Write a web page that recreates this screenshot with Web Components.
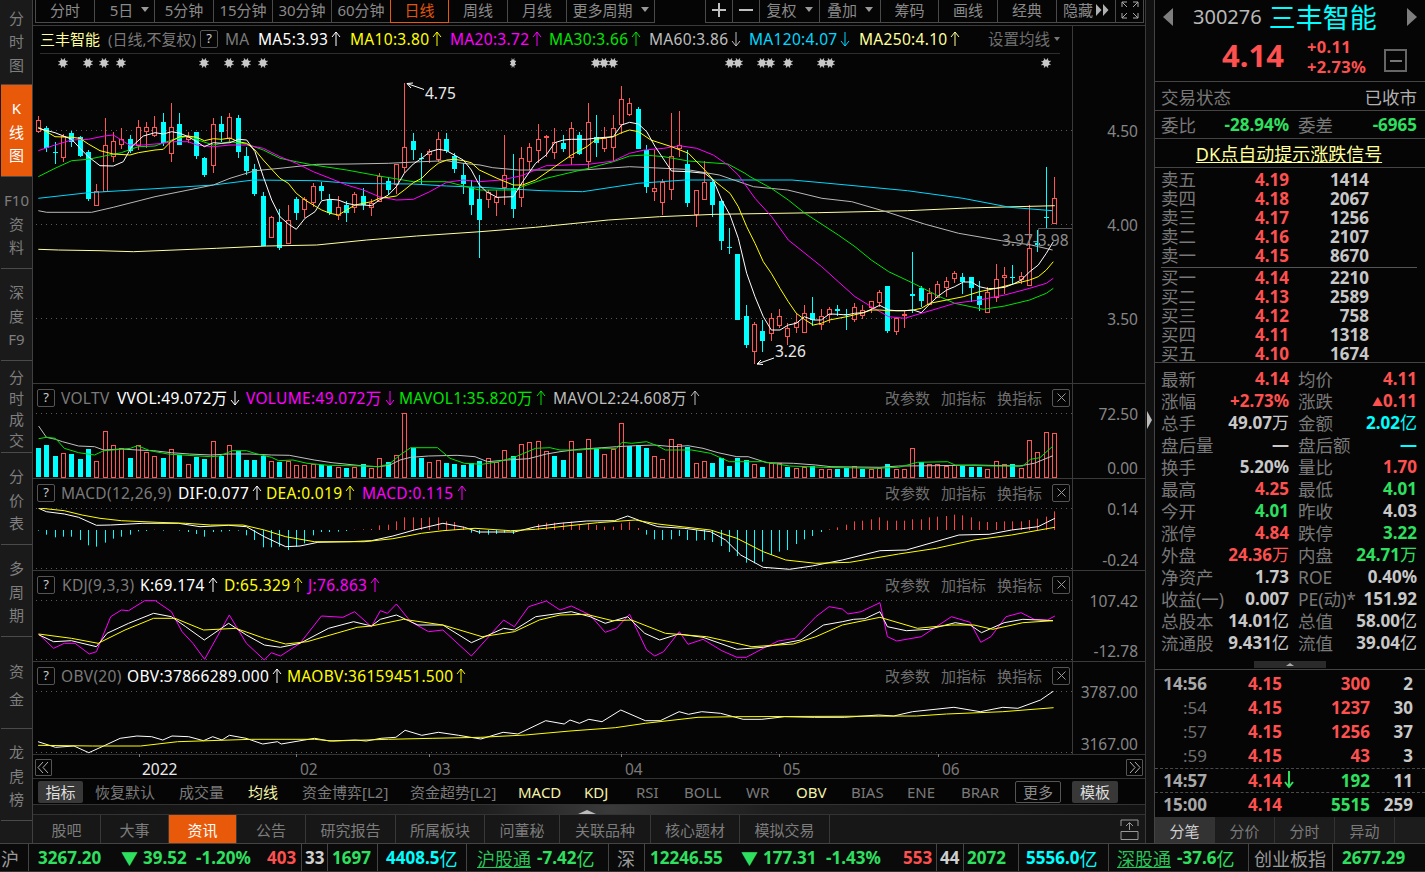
<!DOCTYPE html>
<html lang="zh">
<head>
<meta charset="utf-8">
<title>三丰智能 K线图</title>
<style>
  html,body{margin:0;background:#050505;}
  body{width:1425px;height:872px;overflow:hidden;font-family:"Noto Sans","Noto Sans CJK SC",sans-serif;color:#8a8a8a;}
</style>
</head>
<body>
<ths-app></ths-app>
<script>
// Stock terminal screenshot rebuilt as web components. Chart data read off the picture, y values are in 3x pixels.
(function () {
  const RED = '#ff5555', CY = '#00ffff', GR = '#2fe060', LINE = '#3a3a3a';
  const c1 = (a) => a.map(([x, y]) => [x / 3, y / 3]);
  const c2 = (a) => a.map(([x, y]) => [480 + x / 2.34, y / 3]);
  const c11 = (a) => a.map(([x, y]) => [700 + x / 3, 160 + y / 3]);
  const poly = (pts, col) => `<polyline fill="none" stroke="${col}" stroke-width="1" stroke-linejoin="round" points="${pts.map((p) => p[0].toFixed(1) + ',' + p[1].toFixed(1)).join(' ')}"/>`;
  const dotted = (y) => `<line x1="36" x2="1072" y1="${y + .5}" y2="${y + .5}" stroke="#5a5a5a" stroke-dasharray="1 4"/>`;
  const X = (i) => Math.floor(38.4 + 8.328 * i);

  // R/C, high, body top, body bottom, low
  const K = [
    'R348,360,392,398','C378,385,445,455','C425,455,458,493','R402,407,470,485','C392,400,425,440','C408,412,468,472','C450,455,598,604','R552,572,616,618','R355,436,572,574','R397,424,468,485',
    'R385,418,432,448','C405,418,452,460','R360,380,436,450','R365,380,392,445','R348,380,405,410','C340,366,430,438','R310,380,458,485','C340,372,434,436','R395,410,418,430','C396,396,468,478',
    'C472,474,526,530','R355,372,494,518','C348,372,396,425','R340,350,414,425','C346,354,456,474','C440,468,514,525','C492,508,582,588','C576,588,738,738','R648,650,712,714','C628,666,744,750',
    'R615,660,730,732','C592,596,638,660','R590,596,628,655','R548,558,606,620','C545,558,574,600','C582,598,640,645','R588,622,646,660','C602,615,638,665','R575,582,622,640','C565,588,616,630',
    'R598,610,622,648','R520,528,604,606','C530,544,570,585','R492,492,552,582','R250,442,502,520','C400,424,450,480','C460,474,477,556','R448,452,462,490','R395,418,478,485','C400,418,452,460',
    'C458,468,506,520','C490,526,552,582','C540,560,615,645','C525,598,660,775','R570,575,598,625','R570,590,605,648','R405,526,562,615','C462,565,626,654','R440,475,590,622','R430,442,484,510',
    'R372,418,450,490','R405,408,412,470','R385,425,455,478','C405,430,448,456','R365,385,470,495','C395,405,462,465','R310,367,482,510','C345,410,430,470','R380,415,445,455','R345,385,442,482',
    'R258,298,372,402','R295,310,342,348','C322,326,447,447','C435,450,562,580','R450,565,572,602','R538,545,605,645','R340,468,566,600','R332,435,445,470','C450,492,608,620','R570,570,642,682',
    'R482,546,598,600','C540,546,614,650','C600,604,722,750','C685,742,745,763','C762,762,960,960','C915,948,1035,1043','R967,972,1052,1092','C960,992,1023,1055','R938,954,1000,1023','R927,948,975,985',
    'R968,985,1007,1035','R940,967,980,998','R916,940,995,998','C892,940,960,977','R928,948,972,990','R920,927,941,970','C916,927,934,947','C927,942,946,990','R910,922,956,966','R916,930,946,958',
    'R904,904,920,938','R870,877,905,920','C858,858,992,998','R950,955,994,1005','R930,942,946,985','C756,882,888,940','C858,865,902,920','R863,878,912,915','R842,853,892,892','R830,844,860,890',
    'R813,820,833,848','C818,832,846,882','C832,832,864,905','C843,888,915,932','R860,877,935,935','R792,838,890,905','R802,826,832,882','C796,832,835,852','R815,827,836,852','R616,745,855,858',
    'C690,730,734,755','C502,650,654,685','R532,595,668,668'
  ];
  const candle = (s, i) => {
    const up = s[0] === 'R';
    const [h, t, b, l] = s.slice(1).split(',').map((v) => Math.round(v / 3));
    const x = X(i), col = up ? RED : CY;
    let o = `<line x1="${x + .5}" x2="${x + .5}" y1="${h}" y2="${l}" stroke="${col}"/>`;
    if (up) o += `<rect x="${x - 1.5}" y="${t + .5}" width="4" height="${Math.max(b - t, 1)}" fill="#050505" stroke="${col}"/>`;
    else o += `<rect x="${x - 2}" y="${t}" width="5" height="${Math.max(b - t, 1)}" fill="${col}"/>`;
    return o;
  };
  const burst = (x, narrow) => {
    let o = `<g transform="translate(${x} 63)${narrow ? ' scale(.65 1)' : ''}"><circle r="3.4" fill="#c8c8c8"/>`;
    for (let a = 0; a < 8; a++) o += `<line x2="5" y2="0" transform="rotate(${a * 45 + 22})" stroke="#c8c8c8"/>`;
    return o + '</g>';
  };

  const MA = {
    white: [...c1([[115,385],[165,398],[215,418],[240,445],[265,470],[300,497],[340,498],[370,485],[395,440],[430,408],[465,398],[490,402],[515,395],[540,400],[565,410],[590,425],[613,440],[640,428],[665,430],[690,428],[715,418],[740,420],[765,455],[790,530],[815,600],[840,650],[865,672],[889,688],[915,655],[945,635],[965,602],[990,598],[1015,600],[1040,610],[1065,615],[1090,615],[1115,617],[1138,600],[1165,585],[1189,560],[1213,520],[1240,492],[1265,475],[1290,455],[1315,448],[1340,452],[1363,465],[1390,480],[1414,510],[1438,555]]),
      ...c2([[15,575],[40,592],[78,590],[100,545],[130,490],[155,465],[175,428],[195,420],[214,418],[250,418],[272,414],[312,410],[331,375],[350,367],[371,372],[390,395],[410,440],[448,513],[488,515],[526,520]]),
      ...c11([[40,60],[65,120],[90,165],[115,235],[140,340],[165,410],[190,470],[214,510],[240,510],[265,495],[289,490],[313,470],[340,480],[364,480],[388,462],[415,463],[440,465],[463,460],[490,458],[514,448],[539,436],[566,450],[589,452],[614,452],[640,450],[664,458],[689,432],[715,408],[740,390],[764,380],[790,366],[814,366],[838,380],[865,386],[889,385],[914,382],[940,372],[964,360],[989,335],[1015,315],[1039,280],[1060,245]])],
    yellow: [...c1([[115,382],[140,395],[165,410],[215,412],[240,415],[265,432],[300,452],[340,462],[390,465],[415,458],[465,450],[490,448],[515,422],[540,410],[565,408],[590,412],[613,422],[640,416],[665,418],[690,414],[715,425],[740,430],[765,450],[790,480],[815,508],[840,535],[865,550],[889,580],[915,600],[945,618],[965,630],[990,640],[1015,645],[1040,630],[1065,615],[1090,610],[1115,605],[1138,595],[1165,592],[1189,588],[1213,570],[1240,548],[1265,535],[1290,510],[1315,490],[1340,480],[1363,478],[1390,482],[1414,488],[1438,510]]),
      ...c2([[40,535],[78,555],[100,555],[130,540],[175,500],[214,465],[250,440],[272,418],[312,410],[331,398],[350,390],[371,395],[400,420],[448,440],[488,460],[526,510]]),
      ...c11([[40,60],[65,80],[90,100],[115,140],[140,200],[165,250],[190,305],[214,340],[240,385],[265,425],[289,460],[313,478],[340,495],[364,490],[388,480],[440,470],[490,458],[514,450],[539,450],[566,452],[614,452],[640,450],[664,445],[689,430],[740,420],[790,410],[838,395],[889,385],[940,372],[989,360],[1015,350],[1039,330],[1060,305]])],
    magenta: [...c1([[115,452],[165,435],[215,420],[265,418],[313,408],[340,405],[364,420],[388,435],[430,435],[465,432],[490,430],[515,425],[565,425],[590,435],[640,440],[690,435],[740,435],[790,445],[840,470],[889,490],[940,515],[990,535],[1040,555],[1090,570],[1138,590],[1189,600],[1240,598],[1289,575],[1340,547],[1390,540],[1438,545]]),
      ...c2([[50,540],[97,527],[155,497],[254,493],[312,483],[350,460],[385,450],[430,445],[467,437],[507,445],[546,465],[580,495]]),
      ...c11([[115,45],[165,115],[215,170],[265,240],[315,280],[365,320],[415,365],[465,410],[514,440],[566,470],[614,475],[664,460],[715,445],[764,430],[838,420],[914,405],[989,385],[1039,370],[1060,355]])],
    green: [...c1([[115,530],[165,505],[215,482],[265,478],[313,468],[364,458],[415,440],[465,438],[515,420],[565,408],[600,422],[640,435],[690,425],[740,432],[790,450],[840,475],[889,485],[940,495],[1040,510],[1138,528],[1240,545],[1340,545],[1438,570]]),
      ...c2([[78,570],[110,555],[155,535],[254,505],[312,485],[350,468],[385,465],[430,470],[488,483],[580,492],[620,520]]),
      ...c11([[150,50],[214,85],[265,120],[315,160],[415,225],[465,260],[514,300],[566,335],[640,370],[715,408],[764,430],[850,448],[914,438],[989,420],[1039,400],[1060,385]])],
    gray: [...c1([[115,632],[140,637],[275,637],[340,622],[465,590],[540,575],[640,555],[690,535],[765,512],[840,505],[950,493],[1050,492],[1165,490],[1265,485],[1340,482],[1390,490],[1440,495]]),
      ...c2([[30,503],[90,510],[240,510],[350,500],[480,508],[560,525],[640,560],[720,570],[800,595],[870,605],[950,635],[1040,672],[1120,700],[1220,722],[1290,735],[1340,750]])],
    cyan: [...c1([[115,595],[265,578],[465,566],[640,555],[760,540],[950,542],[1050,550],[1240,552],[1340,558],[1440,562]]),
      ...c2([[145,572],[240,575],[370,550],[480,540],[730,540],[800,548],[1000,572],[1130,595],[1240,622],[1340,632]])],
    pale: [...c1([[115,748],[175,750],[300,752],[400,755],[650,745],[800,738],[950,735],[1100,720],[1250,708],[1440,695]]),
      ...c2([[130,682],[300,660],[420,650],[550,643],[790,638],[1000,632],[1140,624],[1345,617]])],
  };

  const svgWrap = (y, h, inner) => `<svg slot="plot" width="1037" height="${h}" viewBox="35 ${y} 1037 ${h}" style="display:block">${inner}</svg>`;

  function mainPlot() {
    let s = `<line x1="40" x2="1060" y1="53.5" y2="53.5" stroke="#2e2e2e"/>`;
    s += dotted(130) + dotted(224) + dotted(318);
    [63,88,104,121,204,229,246,263,596,604,613,730,738,762,770,788,822,830,1046].forEach((x) => { s += burst(x); });
    s += burst(513, true);
    s += K.map(candle).join('');
    s += poly(MA.pale, '#ffffa0') + poly(MA.cyan, '#00d8ff') + poly(MA.gray, '#b8b8b8') + poly(MA.green, '#00e400') + poly(MA.magenta, '#ff00ff') + poly(MA.yellow, '#ffff00') + poly(MA.white, '#ffffff');
    s += `<path d="M424 89.500L407 83.500M413 83l-6 .5 4 4.500" fill="none" stroke="#fff"/><text x="425" y="99" fill="#e8e8e8" font-size="15.500">4.75</text>`;
    s += `<path d="M774 358L757 364M763 364.500l-6-.5 4-4" fill="none" stroke="#fff"/><text x="775" y="357" fill="#e8e8e8" font-size="15.500">3.26</text>`;
    s += `<path d="M1038.500 247V228.500H1072" fill="none" stroke="#555"/><text x="1002" y="246" fill="#8c8c8c" font-size="15.500">3.97-3.98</text>`;
    return svgWrap(53, 330, s);
  }

  const VOL_A = [205,195,228,220,222,237,208,244,154,196,203,235,196,216,229,234,208,224,252,232,237,184,228,196,213,240,240,228,244,245,243,256,256,253,254,258,260,264,260,252,265,235,246,226,100,203,234,246,240,248,252,255,250,243,235,246,211,228,193,186,184,214,228];
  const VOL_A_C = 'CCCRCCCRRRRCRRRCRCRCCRCRCCCCRCRRRRCCRCRCRRCRRCCRRCCCCCRRRCRRRRC';
  const VOL_B = [240,184,218,178,205,222,207,130,197,196,204,229,238,178,193,201,250,243,248,234,258,234,240,252,261,248,250,261,263,262,258,266,266,267,263,257,266,266,263,252,268,267,205,246,252,252,258,255,257,260,260,268,244,253,253,264,181,217,156,160];
  const VOL_B_C = 'CRCRCRRRCCCRRRRCRRCCCCCRCRRCRRCRRCCRCRRCRRRCRRRRCCCRRRCRRRRR';
  const cv6 = (a, ox, sx) => a.map(([x, y]) => [ox + x / sx, 380 + y / 3]);

  function volPlot() {
    let s = dotted(413);
    VOL_A.concat(VOL_B).forEach((top, i) => {
      const t = Math.round(380 + top / 3), x = X(i), col = (VOL_A_C.slice(0, 63) + VOL_B_C)[i];
      if (col === 'C') s += `<rect x="${x - 2}" y="${t}" width="5" height="${477 - t}" fill="${CY}"/>`;
      else s += `<rect x="${x - 1.5}" y="${t + .5}" width="4" height="${477 - t}" fill="none" stroke="${RED}"/>`;
    });
    s += poly([...cv6([[108,138],[130,172],[155,178],[175,185],[220,198],[265,200],[290,210],[340,207],[385,210],[430,212],[480,218],[530,222],[590,225],[640,222],[700,222],[760,225],[810,226],[880,240],[930,248],[1020,258],[1060,260],[1090,256],[1120,240],[1150,232],[1200,228],[1280,226],[1330,230],[1365,245],[1420,240],[1480,236],[1530,222]], 0, 2.8),
      ...cv6([[0,215],[50,208],[100,204],[150,200],[200,197],[250,195],[300,200],[340,197],[380,205],[420,218],[470,230],[500,230],[550,248],[620,250],[680,255],[720,260],[850,262],[900,258],[1000,257],[1100,255],[1220,258],[1260,250],[1310,227]], 560, 2.657)], '#c0c0c0');
    s += poly([...cv6([[108,176],[130,172],[155,175],[180,205],[220,218],[265,225],[290,212],[340,208],[365,205],[385,197],[420,212],[470,222],[510,225],[590,230],[615,228],[650,212],[690,212],[720,222],[760,232],[780,242],[820,240],[860,250],[920,256],[1020,258],[1060,260],[1090,252],[1120,225],[1150,203],[1225,203],[1260,235],[1300,250],[1350,253],[1395,245],[1440,232],[1500,205],[1540,203]], 0, 2.8),
      ...cv6([[0,210],[50,210],[110,205],[150,205],[165,187],[190,190],[230,185],[260,198],[280,210],[350,210],[400,220],[450,245],[540,245],[610,258],[700,262],[840,265],[900,262],[950,247],[1030,245],[1050,255],[1150,258],[1230,258],[1250,238],[1275,233],[1310,198]], 560, 2.657)], '#00e400');
    return svgWrap(413, 65, s);
  }

  const HIST = [-2,-14,-22,-20,-20,-30,-46,-50,-38,-26,-20,-14,-4,-3,1,-2,0,-2,-6,-12,-20,-6,-5,-3,-2,-16,-30,-52,-52,-50,-60,-50,-40,-16,-6,-6,-5,-3,1,2,3,14,16,26,38,38,36,38,38,26,24,10,-8,-12,-14,-12,-8,-12,-1,5,18,22,22,
    22,25,15,20,15,10,10,20,25,6,-14,-28,-30,-28,-18,-30,-32,-30,-36,-48,-66,-78,-98,-100,-95,-75,-65,-60,-42,-28,-18,-6,2,8,16,26,28,32,38,28,28,28,32,32,38,40,42,46,44,38,26,24,24,26,26,26,30,34,40,56];

  function macdPlot() {
    let s = dotted(508) + dotted(568);
    HIST.forEach((v, i) => {
      if (!v) return;
      const x = X(i) + .5, y0 = 530, y1 = 530 - v / 3;
      s += `<line x1="${x}" x2="${x}" y1="${y0}" y2="${y1}" stroke="${v > 0 ? '#ff4040' : CY}"/>`;
    });
    s += poly([...cv6([[108,385],[130,395],[180,402],[220,412],[270,436],[310,435],[400,430],[500,430],[560,440],[640,436],[690,440],[740,470],[800,500],[840,498],[890,487],[980,485],[1040,482],[1100,468],[1160,450],[1240,430],[1300,442],[1340,456],[1440,456],[1500,440]], 0, 2.8),
      ...cv6([[0,430],[70,423],[145,422],[180,408],[220,425],[260,440],[330,445],[400,455],[440,480],[480,525],[540,562],[610,568],[670,558],[750,540],[850,512],[920,510],[1060,465],[1140,463],[1200,450],[1270,440],[1315,415]], 560, 2.657)], '#fff');
    s += poly([...cv6([[108,384],[180,392],[230,405],[280,415],[340,422],[440,427],[520,430],[590,435],[680,435],[740,450],[800,470],[880,485],[1020,485],[1100,476],[1180,460],[1240,452],[1330,445],[1430,452],[1500,448]], 0, 2.8),
      ...cv6([[0,440],[100,428],[200,420],[260,432],[400,450],[470,475],[540,515],[600,540],[680,550],[770,547],[900,522],[1000,505],[1100,480],[1200,465],[1315,442]], 560, 2.657)], '#ffff00');
    return svgWrap(508, 62, s);
  }

  function kdjPlot() {
    let s = dotted(600) + dotted(659);
    s += poly([...cv6([[108,762],[150,805],[180,790],[210,790],[250,822],[270,815],[310,710],[340,690],[360,692],[405,662],[435,662],[480,695],[510,755],[540,790],[573,838],[642,705],[690,790],[740,840],[760,818],[785,828],[840,790],[900,708],[960,712],[993,695],[1040,740],[1065,692],[1085,700],[1110,672],[1150,725],[1200,755],[1240,750],[1320,828],[1410,720],[1440,740],[1480,680],[1530,663]], 0, 2.8),
      ...cv6([[0,690],[30,678],[80,705],[120,757],[150,745],[185,703],[230,810],[252,828],[275,815],[317,755],[340,793],[380,778],[430,812],[470,832],[495,832],[540,805],[580,783],[625,775],[680,710],[715,680],[750,687],[765,702],[800,695],[850,668],[870,770],[895,783],[960,770],[1040,710],[1090,727],[1118,787],[1145,770],[1185,710],[1225,698],[1260,718],[1295,720],[1315,708]], 560, 2.657)], '#ff00ff');
    s += poly([...cv6([[108,764],[150,785],[200,782],[270,800],[300,760],[360,730],[430,700],[480,710],[520,740],[572,780],[640,730],[690,765],[740,795],[785,802],[840,790],[920,745],[990,725],[1040,738],[1065,718],[1110,705],[1170,735],[1240,735],[1320,788],[1410,745],[1440,750],[1500,710]], 0, 2.8),
      ...cv6([[0,700],[30,695],[80,710],[120,730],[180,710],[225,760],[265,780],[315,762],[380,772],[470,808],[540,802],[640,780],[700,735],[750,725],[780,718],[810,716],[850,695],[870,740],[920,752],[980,748],[1050,728],[1090,735],[1120,758],[1180,728],[1230,718],[1310,722]], 560, 2.657)], '#fff');
    s += poly([...cv6([[108,762],[200,775],[275,790],[350,750],[430,715],[490,715],[570,750],[660,745],[740,775],[800,792],[860,785],[1000,742],[1040,738],[1130,718],[1240,735],[1350,770],[1440,755],[1510,720]], 0, 2.8),
      ...cv6([[0,705],[70,703],[140,722],[190,720],[280,760],[390,770],[510,800],[620,792],[680,770],[750,735],[850,712],[950,745],[1040,735],[1100,735],[1150,748],[1230,728],[1310,722]], 560, 2.657)], '#ffff00');
    return svgWrap(600, 61, s);
  }

  function obvPlot() {
    const cv = (a, ox, sx) => a.map(([x, y]) => [ox + x / sx, 660 + y / 3]);
    let s = dotted(691) + dotted(752);
    s += poly([...cv([[103,245],[150,262],[200,258],[240,278],[280,258],[325,235],[370,228],[410,230],[440,240],[465,228],[510,230],[550,242],[575,230],[600,240],[620,226],[665,235],[710,252],[750,245],[760,252],[850,235],[890,243],[960,240],[990,243],[1030,235],[1070,232],[1095,211],[1140,226],[1185,217],[1240,226],[1300,237],[1360,217],[1400,222],[1475,182],[1525,192]], 0, 2.703),
      ...cv([[0,180],[25,190],[50,178],[85,185],[135,150],[200,182],[240,182],[290,155],[315,163],[350,155],[400,160],[460,178],[510,178],[570,170],[650,172],[730,172],[820,165],[860,168],[910,155],[1020,142],[1090,155],[1150,142],[1190,145],[1250,120],[1285,93]], 570, 2.657)], '#fff');
    s += poly([...cv([[103,256],[250,258],[380,258],[480,245],[680,238],[850,238],[900,243],[1050,238],[1170,235],[1300,232],[1420,225]], 0, 2.703),
      ...cv([[0,213],[120,203],[200,190],[340,172],[440,170],[920,168],[1000,162],[1150,155],[1285,143]], 570, 2.657)], '#ffff00');
    return svgWrap(691, 63, s);
  }

  class LegItem extends HTMLElement {
    connectedCallback() {
      const col = this.getAttribute('color') || '#8a8a8a', dir = this.getAttribute('dir');
      const size = this.getAttribute('size');
      const arrow = dir === 'up' ? 'M5 15V1M1 6l4-5 4 5' : 'M5 1v14M1 10l4 5 4-5';
      this.attachShadow({ mode: 'open' }).innerHTML = `<style>:host{display:inline-flex;align-items:center;flex:none;gap:3px;white-space:nowrap;font-size:${size || 15.5}px;letter-spacing:${size ? 0 : .3}px;}svg{display:block;}</style>
        <span style="color:${col}"><slot></slot></span>${dir ? `<svg width="10" height="16" fill="none" stroke="${col}" stroke-width="1"><path d="${arrow}"/></svg>` : ''}`;
      this.style.width = this.getAttribute('w') + 'px';
    }
  }

  class HelpBox extends HTMLElement {
    connectedCallback() {
      this.attachShadow({ mode: 'open' }).innerHTML = `<style>:host{display:flex;align-items:center;justify-content:center;flex:none;width:18px;height:18px;box-sizing:border-box;border:1px solid #555;border-radius:2px;color:#ccc;font-size:13px;line-height:1;}</style><slot></slot>`;
    }
  }

  class ChartPane extends HTMLElement {
    connectedCallback() {
      const tools = this.hasAttribute('tools');
      this.attachShadow({ mode: 'open' }).innerHTML = `<style>
        :host{display:grid;grid-template-columns:2px 1037px 73px;grid-template-rows:var(--head,29px) 1fr;height:var(--h);box-sizing:border-box;border-top:1px solid ${LINE};}
        .head{grid-column:2;display:flex;align-items:center;padding:0 0 2px 2px;box-sizing:border-box;}
        .tools{margin-left:auto;display:flex;align-items:center;color:#6e6e6e;font-size:15px;}
        .tools span{width:56px;white-space:nowrap;}
        .x{width:18px;height:18px;border:1px solid #555;border-radius:2px;box-sizing:border-box;margin:0 2px 0 -1px;display:flex;align-items:center;justify-content:center;}
        .plot{grid-column:2;grid-row:2;overflow:hidden;}
        .axis{grid-column:3;grid-row:1/3;border-left:1px solid ${LINE};box-sizing:border-box;padding:var(--axis-pad,21px) 7px 1px 0;display:flex;flex-direction:column;justify-content:var(--axis-j,space-between);align-items:flex-end;font-size:15.5px;line-height:18px;color:#858585;overflow:hidden;}
      </style>
      <div class="head"><slot name="legend"></slot>${tools ? `<div class="tools"><span>改参数</span><span>加指标</span><span>换指标</span><div class="x"><svg width="9" height="9" stroke="#999" fill="none"><path d="M.5.5l8 8M8.5.5l-8 8"/></svg></div></div>` : ''}</div>
      <div class="plot"><slot name="plot"></slot></div>
      <div class="axis"><slot name="axis"></slot></div>`;
    }
  }

  class SideNav extends HTMLElement {
    connectedCallback() {
      const items = ['分时图', 'K线图', ['F10','资','料'], ['深','度','F9'], '分时成交', '分价表', '多周期', '资金', '龙虎榜'];
      const html = items.map((t, i) => {
        const chars = Array.isArray(t) ? t : t.split('');
        return `<div class="it${i === 1 ? ' on' : ''}${chars.length === 4 ? ' four' : ''}${chars.length === 2 ? ' two' : ''}" style="height:${i ? 92 : 85}px;padding-top:${i ? 4 : 0}px">${chars.map((c) => `<span>${c}</span>`).join('')}</div>`;
      }).join('');
      this.attachShadow({ mode: 'open' }).innerHTML = `<style>
        :host{display:flex;flex-direction:column;background:#1a1a1a;box-sizing:border-box;border-right:1px solid #404040;height:843px;padding-left:1px;}
        .it{display:flex;flex-direction:column;align-items:center;justify-content:center;border-bottom:1px solid #4a4a4a;box-sizing:border-box;font-size:15px;line-height:23.5px;color:#7e7e7e;}
        .it.four{line-height:21px;}.it.two{line-height:28px;}
        .on{background:#e85a0a;color:#fff;}
      </style>${html}`;
    }
  }

  class TopBar extends HTMLElement {
    connectedCallback() {
      const tri = '<i class="tri"></i>';
      const a = [['分时',59],['<span style="margin-left:10px">5日</span>'+tri,60],['5分钟',59],['15分钟',59],['30分钟',59],['60分钟',59],['日线',59,'on'],['周线',59],['月线',59],['更多周期'+tri,88]];
      const plus = '<svg width="16" height="16" stroke="#c0c0c0" stroke-width="2"><path d="M8 1v14M1 8h14"/></svg>';
      const minus = '<svg width="16" height="16" stroke="#c0c0c0" stroke-width="2"><path d="M1 8h14"/></svg>';
      const hide = '隐藏<svg width="13" height="12" fill="#b0b0b0" style="margin-left:3px"><path d="M0 0l5.5 6L0 12zM7 0l5.5 6L7 12z"/></svg>';
      const full = '<svg width="18" height="18" fill="none" stroke="#aaa"><path d="M1 6V1h5M1 1l5 5M17 6V1h-5M17 1l-5 5M1 12v5h5M1 17l5-5M17 12v5h-5M17 17l-5-5"/></svg>';
      const b = [[plus,27],[minus,27],['复权'+tri,60],['叠加'+tri,61],['筹码',58],['画线',59],['经典',59],[hide,59],[full,28]];
      const row = (l) => l.map(([t, w, c]) => `<div class="b ${c || ''}" style="width:${w}px">${t}</div>`).join('');
      this.attachShadow({ mode: 'open' }).innerHTML = `<style>
        :host{display:flex;height:25px;padding-left:2px;box-sizing:border-box;}
        .g{display:flex;height:23px;border-bottom:1px solid #4a4a4a;box-sizing:border-box;border-left:1px solid #4a4a4a;}
        .g.r{margin-left:50px;}
        .b{display:flex;align-items:center;justify-content:center;border-right:1px solid #4a4a4a;box-sizing:border-box;font-size:15px;color:#8a8a8a;white-space:nowrap;padding-bottom:3px;}
        .on{color:#e0560c;border:1px solid #e85a0a;border-top:0;margin:0 0 -1px -1px;}
        .tri{display:inline-block;border:4px solid transparent;border-top:5px solid #999;border-bottom:0;margin-left:8px;}
      </style><div class="g">${row(a)}</div><div class="g r">${row(b)}</div>`;
    }
  }

  // strip of spaced labels, starts given as x offsets
  const spaced = (list, end) => list.map(([t, x, col], i) => {
    const w = (i < list.length - 1 ? list[i + 1][1] : end) - x;
    return `<span style="flex:none;width:${w}px;color:${col || '#7a7a7a'}">${t}</span>`;
  }).join('');

  class DateAxis extends HTMLElement {
    connectedCallback() {
      const btn = (d) => `<div class="btn"><svg width="13" height="13" fill="none" stroke="#b0b0b0"><path d="${d}"/></svg></div>`;
      const ticks = [139,296,429,621,779,938].map((x) => `<line x1="${x - 33}.5" x2="${x - 33}.5" y1="0" y2="3" stroke="#777"/>`).join('');
      this.attachShadow({ mode: 'open' }).innerHTML = `<style>
        :host{display:flex;align-items:center;height:24px;box-sizing:border-box;font-size:15.5px;border-top:1px solid #333;position:relative;padding:4px 3px 0 2px;}
        .btn{flex:none;width:17px;height:17px;border:1px solid #555;box-sizing:border-box;display:flex;align-items:center;justify-content:center;border-radius:1px;margin-top:-3px;}
        svg.t{position:absolute;left:0;top:-1px;}
      </style><svg class="t" width="1040" height="4">${ticks}</svg>
      ${btn('M6 1L1 6.5 6 12M11 1L6 6.5l5 5.5')}<span style="flex:none;width:90px"></span>
      ${spaced([['2022',142,'#eaeaea'],['02',300],['03',433],['04',625],['05',783],['06',942]], 1126)}
      ${btn('M2 1l5 5.5L2 12M7 1l5 5.5L7 12')}`;
    }
  }

  class IndexBar extends HTMLElement {
    connectedCallback() {
      const Y = '#f2f2a8';
      const list = [['恢复默认',95],['成交量',179],['均线',248,Y],['资金博弈[L2]',302],['资金超势[L2]',410],['MACD',518,Y],['KDJ',584,Y],['RSI',636],['BOLL',684],['WR',746],['OBV',796,Y],['BIAS',851],['ENE',907],['BRAR',961]];
      this.attachShadow({ mode: 'open' }).innerHTML = `<style>
        :host{display:flex;align-items:center;height:27px;box-sizing:border-box;border-top:1px solid #333;border-bottom:1px solid #333;padding-left:5px;font-size:15px;white-space:nowrap;}
        .pill{flex:none;width:45px;height:22px;background:#383838;border-radius:2px;color:#ddd;display:flex;align-items:center;justify-content:center;}
        .more{flex:none;width:46px;height:22px;border:1px solid #555;box-sizing:border-box;border-radius:2px;display:flex;align-items:center;justify-content:center;color:#8a8a8a;}
      </style><div class="pill">指标</div><span style="flex:none;width:12px"></span>${spaced(list, 1015)}<div class="more">更多</div><span style="flex:none;width:11px"></span><div class="pill" style="width:46px">模板</div>`;
    }
  }

  class InfoTabs extends HTMLElement {
    connectedCallback() {
      const tabs = [['股吧',68],['大事',68],['资讯',68,1],['公告',69],['研究报告',90],['所属板块',89],['问董秘',75],['关联品种',91],['核心题材',89],['模拟交易',90]];
      this.attachShadow({ mode: 'open' }).innerHTML = `<style>
        :host{display:block;}
        .fade{height:9px;background:linear-gradient(90deg,#121212 0,#1e1e1e 40%,#3a3a3a 52%,#1e1e1e 66%,#121212 100%);display:flex;justify-content:center;align-items:flex-end;}
        .fade i{border:9px solid transparent;border-bottom:4px solid #bbb;border-top:0;margin-left:-4px;}
        .row{display:flex;height:29px;background:#171717;border-top:1px solid #333;box-sizing:border-box;font-size:15px;color:#7c7c7c;align-items:stretch;}
        .t{display:flex;align-items:center;justify-content:center;flex:none;border-right:1px solid #383838;box-sizing:border-box;}
        .on{background:#e85a0a;color:#fff;}
        svg{margin:auto 6px auto auto;align-self:center;}
      </style><div class="fade"><i></i></div><div class="row">${tabs.map(([t, w, on]) => `<div class="t ${on ? 'on' : ''}" style="width:${w}px">${t}</div>`).join('')}
      <svg width="19" height="21" fill="none" stroke="#999"><path d="M1 7V1h17v6M1 12.500h17v8H1zM9.500 11V4M6 7l3.500-3.500L13 7" /></svg></div>`;
    }
  }

  const unit = (t) => `<i>${t}</i>`;
  class QuotePanel extends HTMLElement {
    connectedCallback() {
      const R = '#ff5050', G = GR, W = '#c8c8c8', C = CY;
      const book = (l, a) => l.map((n, i) => `<div class="ob"><span class="lb">${n}</span><b style="color:${R}">${a[i][0]}</b><b style="color:${W}">${a[i][1]}</b></div>`).join('');
      const sells = book(['卖五','卖四','卖三','卖二','卖一'], [['4.19',1414],['4.18',2067],['4.17',1256],['4.16',2107],['4.15',8670]]);
      const buys = book(['买一','买二','买三','买四','买五'], [['4.14',2210],['4.13',2589],['4.12',758],['4.11',1318],['4.10',1674]]);
      const stats = [
        ['最新','4.14',R,'均价','4.11',R],['涨幅','+2.73%',R,'涨跌','<small>▲</small>0.11',R],['总手','49.07'+unit('万'),W,'金额','2.02'+unit('亿'),C],['盘后量','—',W,'盘后额','—',C],
        ['换手','5.20%',W,'量比','1.70',R],['最高','4.25',R,'最低','4.01',G],['今开','4.01',G,'昨收','4.03',W],['涨停','4.84',R,'跌停','3.22',G],
        ['外盘','24.36'+unit('万'),R,'内盘','24.71'+unit('万'),G],['净资产','1.73',W,'ROE','0.40%',W],['收益(一)','0.007',W,'PE(动)*','151.92',W],['总股本','14.01'+unit('亿'),W,'总值','58.00'+unit('亿'),W],['流通股','9.431'+unit('亿'),W,'流值','39.04'+unit('亿'),W],
      ].map((r) => `<div class="st"><span class="lb">${r[0]}</span><b style="color:${r[2]}">${r[1]}</b><span class="lb l2">${r[3]}</span><b style="color:${r[5]}">${r[4]}</b></div>`).join('');
      const darrow = `<svg class="da" width="10" height="19" fill="none" stroke="${G}" stroke-width="2"><path d="M5 0v16M1 11l4 5 4-5"/></svg>`;
      const trades = [['14:56','4.15','300',R,'2',1],[':54','4.15','1237',R,'30'],[':57','4.15','1256',R,'37'],[':59','4.15','43',R,'3'],['14:57','4.14'+darrow,'192',G,'11',1,1],['15:00','4.14','5515',G,'259',1,1]]
        .map(([t, p, v, c, n, strong, dash]) => `<div class="tr${dash ? ' dash' : ''}"><b class="tm${strong ? '' : ' sub'}">${t}</b><b class="pr" style="color:${R}">${p}</b><b style="color:${c}">${v}</b><b style="color:${W}">${n}</b></div>`).join('');
      this.attachShadow({ mode: 'open' }).innerHTML = `<style>
        :host{display:flex;flex-direction:column;height:843px;box-sizing:border-box;border-left:1px solid #444;width:271px;font-size:17.500px;}
        i{font-style:normal;font-weight:400;}
        b{font-weight:700;font-size:17px;white-space:nowrap;}
        .lb{color:#787878;white-space:nowrap;}
        .head{height:82px;box-sizing:border-box;border-bottom:1px solid #444;display:grid;grid-template-columns:auto;grid-template-rows:33px 1fr;}
        .code{display:flex;align-items:center;padding:0 8px;}
        .code span{font-size:20px;color:#b8b8b8;margin-left:20px;}
        .code strong{font-size:27px;font-weight:400;color:${CY};margin-left:7px;}
        .tr-l{border:5px solid transparent;border-right:10px solid #7e7e7e;border-left:0;border-top-width:9px;border-bottom-width:9px;}
        .tr-r{border:5px solid transparent;border-left:10px solid #7e7e7e;border-right:0;border-top-width:9px;border-bottom-width:9px;margin-left:auto;}
        .px{display:flex;align-items:center;padding:0 0 6px 67px;}
        .px .big{font-size:31px;font-weight:700;color:${R};width:85px;line-height:1;}
        .px .ch{display:flex;flex-direction:column;color:${R};font-weight:700;font-size:16.500px;line-height:20px;letter-spacing:.3px;margin-top:4px;}
        .px .box{margin:11px 18px 0 auto;width:23px;height:23px;border:2px solid #666;box-sizing:border-box;display:flex;align-items:center;justify-content:center;}
        .box u{display:block;width:12px;height:2px;background:#777;}
        .rowb{display:flex;align-items:center;justify-content:space-between;padding:0 8px 0 6px;border-bottom:1px solid #444;box-sizing:border-box;height:29px;}
        .rowb.two{display:grid;justify-content:start;grid-template-columns:128px 128px;padding:0 0 0 6px;height:28px;}
        .dk{height:29px;border-bottom:1px solid #444;box-sizing:border-box;display:flex;align-items:center;justify-content:center;color:#ffff99;font-size:18px;text-decoration:underline;padding-right:2px;}
        .ob{display:grid;grid-template-columns:128px 80px;padding-left:6px;height:19px;line-height:19px;align-items:center;}
        .ob .lb{grid-column:1;grid-row:1;}
        .ob b:nth-of-type(1){grid-column:1;grid-row:1;text-align:right;}
        .ob b:nth-of-type(2){grid-column:2;grid-row:1;text-align:right;}
        .sep{height:1px;background:#555;margin:2px 8px 0 6px;}
        .book{padding-top:2px;height:195px;box-sizing:border-box;border-bottom:1px solid #444;}
        .stats{height:286px;padding-top:5px;box-sizing:border-box;}
        .st{display:grid;grid-template-columns:128px 128px;padding-left:6px;height:22px;line-height:22px;}
        .st .lb{grid-column:1;grid-row:1;}
        .st b:nth-of-type(1){grid-column:1;grid-row:1;text-align:right;}
        .st .l2{grid-column:2;grid-row:1;padding-left:9px;}
        .st b:nth-of-type(2){grid-column:2;grid-row:1;text-align:right;}
        small{font-size:11px;font-weight:400;vertical-align:1px;}
        .grip{height:21px;border-bottom:1px solid #444;box-sizing:border-box;display:flex;justify-content:center;align-items:flex-start;padding-top:12px;}
        .grip div{width:72px;height:7px;background:#2a2a2a;display:flex;justify-content:center;align-items:center;}
        .grip em{border:4px solid transparent;border-bottom:3px solid #aaa;border-top:0;}
        .trades{padding-top:2px;}
        .tr{display:grid;grid-template-columns:52px 75px 88px 43px;height:24px;line-height:24px;text-align:right;}
        .tr b{font-size:17px;}
        .tm{color:#a8a8a8;}
        .sub{color:#6e6e6e;font-weight:400;}
        .pr{position:relative;}
        .da{position:absolute;left:77px;top:2px;}
        .dash{border-top:1px dashed #4a4a4a;box-sizing:border-box;}
        .tabs{display:flex;height:26px;background:#1c1c1c;font-size:15px;color:#7a7a7a;margin-top:auto;}
        .tabs div{width:60px;display:flex;align-items:center;justify-content:center;border-right:1px solid #333;box-sizing:border-box;}
        .tabs .on{background:#333;color:#cfcfcf;}
      </style>
      <div class="head">
        <div class="code"><div class="tr-l"></div><span>300276</span><strong>三丰智能</strong><div class="tr-r"></div></div>
        <div class="px"><div class="big">4.14</div><div class="ch"><span>+0.11</span><span>+2.73%</span></div><div class="box"><u></u></div></div>
      </div>
      <div class="rowb"><span class="lb">交易状态</span><span style="color:#b0b0b0">已收市</span></div>
      <div class="rowb two"><span class="lb" style="grid-area:1/1">委比</span><b style="grid-area:1/1;text-align:right;color:${G}">-28.94%</b><span class="lb" style="grid-area:1/2;padding-left:9px">委差</span><b style="grid-area:1/2;text-align:right;color:${G}">-6965</b></div>
      <div class="dk">DK点自动提示涨跌信号</div>
      <div class="book">${sells}<div class="sep"></div>${buys}</div>
      <div class="stats">${stats}</div>
      <div class="grip"><div><em></em></div></div>
      <div class="trades">${trades}</div>
      <div class="tabs"><div class="on">分笔</div><div>分价</div><div>分时</div><div>异动</div></div>`;
    }
  }

  class StatusBar extends HTMLElement {
    connectedCallback() {
      const G = GR, R = '#ff5050', C = CY, N = '#cfcfcf', L = '#9a9a9a';
      const y = (t) => `${t}<i>亿</i>`;
      const items = [
        [0,'沪',L,0,1,'n'],[28,'3267.20',G,1,9],[121,'▼',G,0,0],[143,'39.52',G],[196,'-1.20%',G],[267,'403',R],[301,'33',N,1,3],[327,'1697',G,1,4],[377,y('4408.5'),C,1,8],
        [466,'<u>沪股通</u>','#2bc45a',1,10,'n'],[537,y('-7.42'),G],[608,'深',L,1,8,'n'],[644,'12246.55',G,1,5],[741,'▼',G],[763,'177.31',G],[826,'-1.43%',G],[903,'553',R],
        [936,'44',N,1,3],[963,'2072',G,1,3],[1018,y('5556.0'),C,1,7],[1108,'<u>深股通</u>','#2bc45a',1,8,'n'],[1177,y('-37.6'),G],[1248,'创业板指',L,1,5,'n'],[1332,'2677.29',G,1,9],
      ];
      const html = items.map(([x, t, col, div, pad, n], i) => {
        const w = (i < items.length - 1 ? items[i + 1][0] : 1425) - x;
        return `<div class="c${div ? ' d' : ''}${n ? ' n' : ''}" style="width:${w}px;color:${col};padding-left:${pad || 0}px">${t}</div>`;
      }).join('');
      this.attachShadow({ mode: 'open' }).innerHTML = `<style>
        :host{display:flex;height:29px;box-sizing:border-box;border-top:1px solid #444;border-bottom:1px solid #333;background:#0a0a0a;grid-column:1/-1;}
        .c{flex:none;box-sizing:border-box;display:flex;align-items:center;font-weight:700;font-size:17px;white-space:nowrap;}
        .d{border-left:1px solid #444;}
        .n{font-weight:400;font-size:18px;}
        i{font-style:normal;font-weight:400;font-size:18px;}
      </style>${html}`;
    }
  }

  class Splitter extends HTMLElement {
    connectedCallback() {
      this.attachShadow({ mode: 'open' }).innerHTML = `<style>:host{display:flex;align-items:center;justify-content:center;background:#111;height:843px;border-left:1px solid #3a3a3a;box-sizing:border-box;padding-bottom:4px;}</style>
      <svg width="6" height="18" fill="#bbb"><path d="M0 0l5 9-5 9z"/></svg>`;
    }
  }

  class ThsApp extends HTMLElement {
    connectedCallback() {
      const leg = (t, c, w, d, size) => `<leg-item slot="legend" color="${c}" w="${w}"${d ? ` dir="${d}"` : ''}${size ? ` size="${size}"` : ''}>${t}</leg-item>`;
      const help = '<help-box slot="legend">?</help-box>';
      const gap = (w) => `<span slot="legend" style="flex:none;width:${w}px"></span>`;
      const ax = (...l) => l.map((t) => `<span slot="axis">${t}</span>`).join('');
      const Y = '#ffff00', W = '#fff', M = '#ff00ff', Gn = '#00e400', Gy = '#7a7a7a';
      const root = this.attachShadow({ mode: 'open' });
      root.innerHTML = `<style>
        :host{display:grid;grid-template-columns:33px 1112px 9px 271px;grid-template-rows:843px 29px;width:1425px;height:872px;}
        .col{display:flex;flex-direction:column;min-width:0;}
        #main{--h:358px;--head:27px;--axis-pad:96px;--axis-j:flex-start;}
        #main span[slot=axis]{flex:none;height:94px;line-height:18px;}
        #vol{--h:95px;} #macd{--h:92px;} #kdj{--h:91px;} #obv{--h:93px;}
        .set{margin-left:auto;margin-right:12px;font-size:15.500px;color:#6e6e6e;display:flex;align-items:center;gap:4px;}
        .set i{border:3.500px solid transparent;border-top:4px solid #777;border-bottom:0;}
      </style>
      <side-nav></side-nav>
      <div class="col">
        <top-bar></top-bar>
        <chart-pane id="main">
          ${gap(3)}${leg('三丰智能', '#ffff99', 68, '', 15)}${leg('(日线,不复权)', Gy, 92, '', 15)}${help}
          ${gap(7)}${leg('MA', Gy, 33)}
          ${leg('MA5:3.93', W, 92, 'up')}${leg('MA10:3.80', Y, 100, 'up')}${leg('MA20:3.72', M, 99, 'up')}${leg('MA30:3.66', Gn, 100, 'up')}${leg('MA60:3.86', '#bdbdbd', 100, 'down')}${leg('MA120:4.07', '#00d8ff', 110, 'down')}${leg('MA250:4.10', '#ffff99', 128, 'up')}
          <div slot="legend" class="set">设置均线<i></i></div>
          ${mainPlot()}${ax('4.50', '4.00', '3.50')}
        </chart-pane>
        <chart-pane id="vol" tools>
          ${help}${gap(6)}${leg('VOLTV', Gy, 56)}${leg('VVOL:49.072万', W, 129, 'down')}${leg('VOLUME:49.072万', M, 153, 'down')}${leg('MAVOL1:35.820万', Gn, 154, 'up')}${leg('MAVOL2:24.608万', '#bdbdbd', 160, 'up')}
          ${volPlot()}${ax('72.50', '0.00')}
        </chart-pane>
        <chart-pane id="macd" tools>
          ${help}${gap(6)}${leg('MACD(12,26,9)', Gy, 117)}${leg('DIF:0.077', W, 88, 'up')}${leg('DEA:0.019', Y, 96, 'up')}${leg('MACD:0.115', M, 110, 'up')}
          ${macdPlot()}${ax('0.14', '-0.24')}
        </chart-pane>
        <chart-pane id="kdj" tools>
          ${help}${gap(7)}${leg('KDJ(9,3,3)', Gy, 78)}${leg('K:69.174', W, 84, 'up')}${leg('D:65.329', Y, 84, 'up')}${leg('J:76.863', M, 90, 'up')}
          ${kdjPlot()}${ax('107.42', '-12.78')}
        </chart-pane>
        <chart-pane id="obv" tools>
          ${help}${gap(6)}${leg('OBV(20)', Gy, 66)}${leg('OBV:37866289.000', W, 160, 'up')}${leg('MAOBV:36159451.500', Y, 190, 'up')}
          ${obvPlot()}${ax('3787.00', '3167.00')}
        </chart-pane>
        <date-axis></date-axis>
        <index-bar></index-bar>
        <info-tabs></info-tabs>
      </div>
      <split-bar></split-bar>
      <quote-panel></quote-panel>
      <status-bar></status-bar>`;
    }
  }

  customElements.define('leg-item', LegItem);
  customElements.define('help-box', HelpBox);
  customElements.define('chart-pane', ChartPane);
  customElements.define('side-nav', SideNav);
  customElements.define('top-bar', TopBar);
  customElements.define('date-axis', DateAxis);
  customElements.define('index-bar', IndexBar);
  customElements.define('info-tabs', InfoTabs);
  customElements.define('quote-panel', QuotePanel);
  customElements.define('status-bar', StatusBar);
  customElements.define('split-bar', Splitter);
  customElements.define('ths-app', ThsApp);
})();
</script>
</body>
</html>
